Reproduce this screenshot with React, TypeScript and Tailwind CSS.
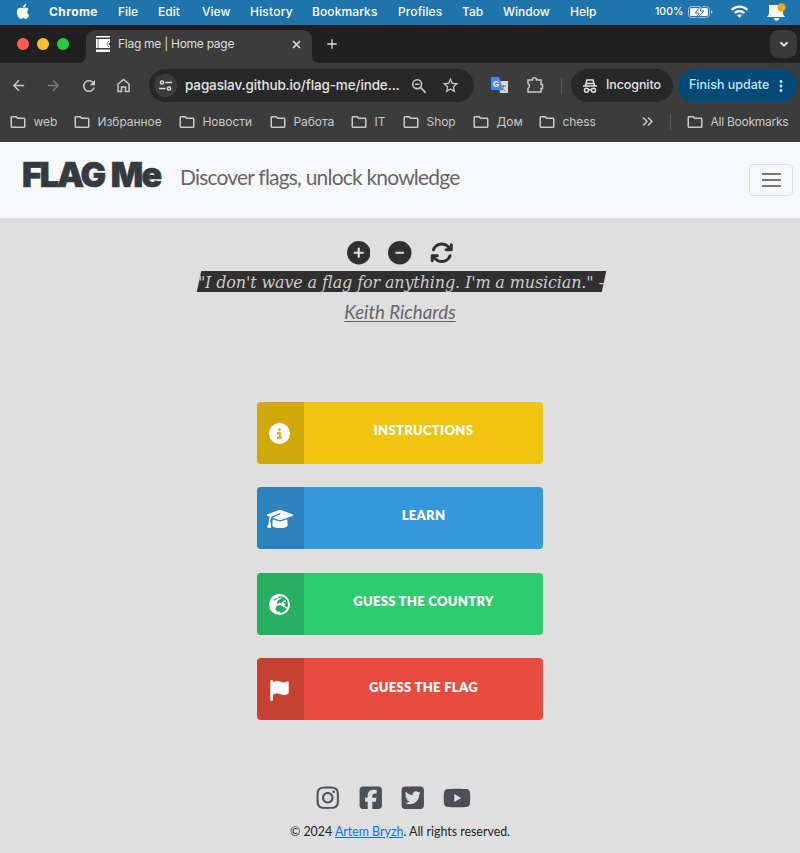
import type { ReactNode } from "react";
import {
  FaApple, FaArrowsRotate, FaCircleInfo, FaCircleMinus, FaCirclePlus, FaEarthEurope, FaFlag,
  FaGraduationCap, FaInstagram, FaSquareFacebook, FaSquareTwitter, FaYoutube,
} from "react-icons/fa6";
import {
  MdArrowBack, MdArrowForward, MdAdd, MdMoreVert, MdOutlineExtension,
  MdOutlineFolder, MdRefresh, MdStarOutline, MdWifi,
} from "react-icons/md";

function MenuBar() {
  return (
    <div className="flex h-[25px] items-center bg-[#1f74ab] pb-[2px] text-[12px] font-medium text-white">
      <FaApple className="ml-[15px] h-[17px] w-[16px]" />
      <span className="ml-[18px] w-[69px] font-bold tracking-[0.4px]">Chrome</span>
      <span className="w-[40px]">File</span>
      <span className="w-[44px]">Edit</span>
      <span className="w-[48px]">View</span>
      <span className="w-[62px] tracking-[0.2px]">History</span>
      <span className="w-[86px] tracking-[0.1px]">Bookmarks</span>
      <span className="w-[64px] tracking-[0.1px]">Profiles</span>
      <span className="w-[41px]">Tab</span>
      <span className="w-[67px]">Window</span>
      <span className="w-[85px]">Help</span>
      <span className="w-[33px] text-[10.5px]">100%</span>
      <svg className="h-[12px] w-[25px]" viewBox="0 0 25 12" fill="none">
        <rect x=".5" y=".5" width="21" height="11" rx="3" stroke="#9dc4dd" />
        <rect x="2" y="2" width="18" height="8" rx="1.5" fill="white" />
        <path d="M23 4v4c2-1 2-3 0-4" fill="#9dc4dd" />
        <path d="M13 0 7 7h3.5L9 12l7-7h-3.7L14 0z" fill="white" stroke="#1f74ab" />
      </svg>
      <MdWifi className="ml-[17px] h-[19px] w-[19px]" />
      <svg className="ml-[17px] h-[18px] w-[21px]" viewBox="0 0 21 18">
        <path d="M3 2h14v9l2 3H1l2-3z M7.500 15h6l-1.500 2.500H9z" fill="white" />
        <circle cx="15.5" cy="4.5" r="4.200" fill="#f8a51c" />
      </svg>
    </div>
  );
}

function TabStrip() {
  return (
    <div className="flex h-[38px] bg-[#202020] text-[#dedede]">
      <div className="flex w-[78px] items-center gap-[8px] pl-[17px]">
        <i className="size-[12px] rounded-full bg-[#ff5f57]" />
        <i className="size-[12px] rounded-full bg-[#febc2e]" />
        <i className="size-[12px] rounded-full bg-[#28c840]" />
      </div>
      <svg className="mt-[30px] size-[8px]" viewBox="0 0 8 8"><path d="M0 8Q8 8 8 0V8z" fill="#3c3c3c" /></svg>
      <div className="mt-[5px] flex w-[226px] items-center rounded-t-[9px] bg-[#3c3c3c] pb-[5px]">
        <svg className="ml-[10px] h-[16px] w-[14px]" viewBox="0 0 14 16" fill="white">
          <path d="M0 0h14v1.5H0zM0 3h14v3l-1.5 2L14 10v2H0z M0 13.5h14V16H0z" />
          <path d="M2 2v12" stroke="#3c3c3c" strokeWidth=".7" />
          <path d="M13 5q-4 3 0 6" stroke="#777" fill="none" />
        </svg>
        <span className="ml-[8px] w-[174px] text-[12px] tracking-[-0.27px]">Flag me | Home page</span>
        <svg className="size-[9px]" viewBox="0 0 9 9" fill="none" stroke="currentColor" strokeWidth="1.6">
          <path d="m1 1 7 7m0-7L1 8" />
        </svg>
      </div>
      <svg className="mt-[30px] size-[8px]" viewBox="0 0 8 8"><path d="M0 0Q0 8 8 8H0z" fill="#3c3c3c" /></svg>
      <MdAdd className="mt-[11px] ml-[4px] size-[16px]" />
      <div className="mt-[5px] mr-[3px] ml-auto flex h-[28px] w-[27px] items-center justify-center rounded-[9px] bg-[#3a3a3a]">
        <svg className="size-[10px]" viewBox="0 0 10 10" fill="none" stroke="currentColor" strokeWidth="2">
          <path d="m1.500 3.200 3.500 3.500 3.500-3.500" />
        </svg>
      </div>
    </div>
  );
}

function Toolbar() {
  return (
    <div className="flex h-[45px] items-center text-[13px] font-medium text-[#c9c9c9]">
      <MdArrowBack className="ml-[10px] size-[17px]" />
      <MdArrowForward className="ml-[18px] size-[17px] text-[#7b7b7b]" />
      <MdRefresh className="ml-[18px] size-[18px]" />
      <svg className="ml-[18px] size-[15px]" viewBox="0 0 15 15" fill="none" stroke="currentColor" strokeWidth="1.5">
        <path d="M2 13.500V6l5.500-4.500L13 6v7.500H9.500V9h-4v4.500z" />
      </svg>
      <div className="ml-[18px] flex h-[33px] w-[325px] items-center rounded-full bg-[#282828]">
        <div className="ml-[5px] flex size-[23px] items-center justify-center rounded-full bg-[#3c3c3c]">
          <svg className="size-[13px]" viewBox="0 0 13 13" fill="none" stroke="#dedede" strokeWidth="1.5">
            <circle cx="3" cy="3.500" r="1.600" /><path d="M6.500 3.500H13M0 9.500h6.500" /><circle cx="10" cy="9.500" r="1.600" />
          </svg>
        </div>
        <span className="ml-[8px] w-[226px] text-[13.5px] tracking-[-0.13px] whitespace-nowrap text-[#e3e3e3]">pagaslav.github.io/flag-me/inde...</span>
        <svg className="size-[16px]" viewBox="0 0 16 16" fill="none" stroke="currentColor" strokeWidth="1.6">
          <circle cx="6.200" cy="6.200" r="4.400" /><path d="m9.600 9.600 5 5M4 6.200h4.400" />
        </svg>
        <MdStarOutline className="ml-[14px] size-[19px]" />
      </div>
      <svg className="ml-[17px] size-[17px]" viewBox="0 0 17 17">
        <path d="M7 4h10v12H9z" fill="#d7d7d7" /><path d="M10 9h5m-2.500-1v1c0 3-2 4-3 5m1-3 4 3" stroke="#777" fill="none" />
        <path d="M0 0h8l4 13H0z" fill="#4285f4" />
        <text x="2" y="9.500" className="font-['Inter'] text-[8px] font-bold" fill="white">G</text>
      </svg>
      <svg className="ml-[18px] size-[19px]" viewBox="0 0 19 19" fill="none" stroke="currentColor" strokeWidth="1.500">
        <path d="M2 4h4.500V2.500q2-1.500 4 0V4H15v4.500h1.500v4H15V16H2v-3.500q3-2.500 0-5z" />
      </svg>
      <i className="ml-[16px] h-[16px] w-px bg-[#5b5b5b]" />
      <div className="ml-[9px] flex h-[33px] w-[102px] items-center rounded-full bg-[#282828] text-[#e3e3e3]">
        <svg className="ml-[11px] size-[16px]" viewBox="0 0 16 16" fill="none" stroke="currentColor" strokeWidth="1.5">
          <path d="M1 8h14M3.500 7.500 5 2h6l1.500 5.500" /><circle cx="4.500" cy="12.200" r="2" /><circle cx="11.500" cy="12.200" r="2" /><path d="M6.500 12q1.500-1 3 0M4 5.500h8" />
        </svg>
        <span className="ml-[8px] text-[12.5px] tracking-[-0.1px]">Incognito</span>
      </div>
      <div className="ml-[5px] flex h-[33px] w-[119px] items-center rounded-full bg-[#004a77] text-[#c2e7ff]">
        <span className="ml-[11px] w-[83px] text-[12.5px] whitespace-nowrap">Finish update</span>
        <MdMoreVert className="size-[18px]" />
      </div>
    </div>
  );
}

function Bookmark({ width, children }: { width: string; children: ReactNode }) {
  return (
    <div className={`flex items-center gap-[6.500px] whitespace-nowrap ${width}`}>
      <MdOutlineFolder className="-ml-px size-[18px] shrink-0" />
      {children}
    </div>
  );
}

function Bookmarks() {
  return (
    <div className="flex h-[34px] items-center pb-[7px] pl-[10px] text-[12px] tracking-[-0.05px] text-[#c9c9c9]">
      <Bookmark width="w-[64px]">web</Bookmark>
      <Bookmark width="w-[105px]">Избранное</Bookmark>
      <Bookmark width="w-[91px]">Новости</Bookmark>
      <Bookmark width="w-[81px]">Работа</Bookmark>
      <Bookmark width="w-[52px]">IT</Bookmark>
      <Bookmark width="w-[70px]">Shop</Bookmark>
      <Bookmark width="w-[66px]">Дом</Bookmark>
      <Bookmark width="w-[103px]">chess</Bookmark>
      <svg className="size-[11px]" viewBox="0 0 11 11" fill="none" stroke="currentColor" strokeWidth="1.5">
        <path d="m1 1.500 4 4-4 4M6 1.500l4 4-4 4" />
      </svg>
      <i className="mr-[16px] ml-[17px] h-[16px] w-px bg-[#5b5b5b]" />
      <Bookmark width="w-[110px] tracking-[-0.25px]">All Bookmarks</Bookmark>
    </div>
  );
}

function Choice({ color, icon, children }: { color: string; icon: ReactNode; children: ReactNode }) {
  return (
    <button className={`flex h-[62px] w-[286px] overflow-hidden rounded-[4px] text-white ${color}`}>
      <span className="flex h-full w-[47px] items-center justify-center bg-black/14 pt-[2px] pr-[2px]">{icon}</span>
      <span className="flex h-full flex-1 items-center justify-center pb-[4px] text-[13px] font-extrabold tracking-[0.3px]">{children}</span>
    </button>
  );
}

export default function App() {
  return (
    <div className="h-[853px] w-[800px] overflow-hidden bg-[#dfdfdf] font-['Lato',sans-serif]">
      <div className="h-[142px] bg-[#3c3c3c] font-['Inter',sans-serif]">
        <MenuBar />
        <TabStrip />
        <Toolbar />
        <Bookmarks />
      </div>
      <header className="flex h-[76px] items-center bg-[#f8f9fb]">
        <h1 className="ml-[22px] w-[158px] pb-[11px] font-['Inter'] text-[34px] leading-none font-black tracking-[-2px] [word-spacing:2px] whitespace-nowrap text-[#343a40] [-webkit-text-stroke:0.6px_#343a40]">
          FLAG Me
        </h1>
        <p className="pb-[7px] text-[21px] leading-none tracking-[-0.8px] whitespace-nowrap text-[#666]">Discover flags, unlock knowledge</p>
        <button className="mr-[7px] ml-auto flex h-[32px] w-[44px] flex-col items-center justify-center gap-[4px] rounded-[4px] border border-[#dedfe1]">
          <i className="h-[2px] w-[19px] bg-[#777]" />
          <i className="h-[2px] w-[19px] bg-[#777]" />
          <i className="h-[2px] w-[19px] bg-[#777]" />
        </button>
      </header>
      <main className="flex flex-col items-center">
        <div className="mt-[23px] flex gap-[18px] text-[#303030]">
          <FaCirclePlus className="size-[23.5px]" />
          <FaCircleMinus className="size-[23.5px]" />
          <FaArrowsRotate className="size-[23.5px]" />
        </div>
        <div className="mt-[6.500px] ml-[3px] flex h-[21px] w-[405px] -skew-x-12 items-center justify-center bg-[#303030]">
          <p className="skew-x-12 pt-[2px] pr-[1px] font-['DejaVu_Serif'] text-[16px] tracking-[-0.14px] whitespace-nowrap text-[#ccc] italic">
            "I don't wave a flag for anything. I'm a musician." -
          </p>
        </div>
        <p className="mt-[7.500px] text-[18.7px] leading-[24px] text-[#666] italic underline underline-offset-2">Keith Richards</p>
        <div className="mt-[78px] flex flex-col gap-[23.6px]">
          <Choice color="bg-[#f1c40f]" icon={<FaCircleInfo className="size-[21px]" />}>INSTRUCTIONS</Choice>
          <Choice color="bg-[#3498db]" icon={<FaGraduationCap className="size-[26px]" />}>LEARN</Choice>
          <Choice color="bg-[#2ecc71]" icon={<FaEarthEurope className="size-[21px]" />}>GUESS THE COUNTRY</Choice>
          <Choice color="bg-[#e74c3c]" icon={<FaFlag className="size-[21px]" />}>GUESS THE FLAG</Choice>
        </div>
      </main>
      <footer className="mt-[63.500px] flex flex-col items-center">
        <div className="mr-[14px] flex items-center gap-[17px] text-[#495057]">
          <FaInstagram className="size-[25.5px]" />
          <FaSquareFacebook className="size-[25.5px]" />
          <FaSquareTwitter className="size-[25.5px]" />
          <FaYoutube className="size-[28px]" />
        </div>
        <p className="mt-[12.500px] text-[12.4px] leading-[16px] text-[#212529]">
          © 2024 <a className="text-[#0d6efd] underline">Artem Bryzh</a>. All rights reserved.
        </p>
      </footer>
    </div>
  );
}
